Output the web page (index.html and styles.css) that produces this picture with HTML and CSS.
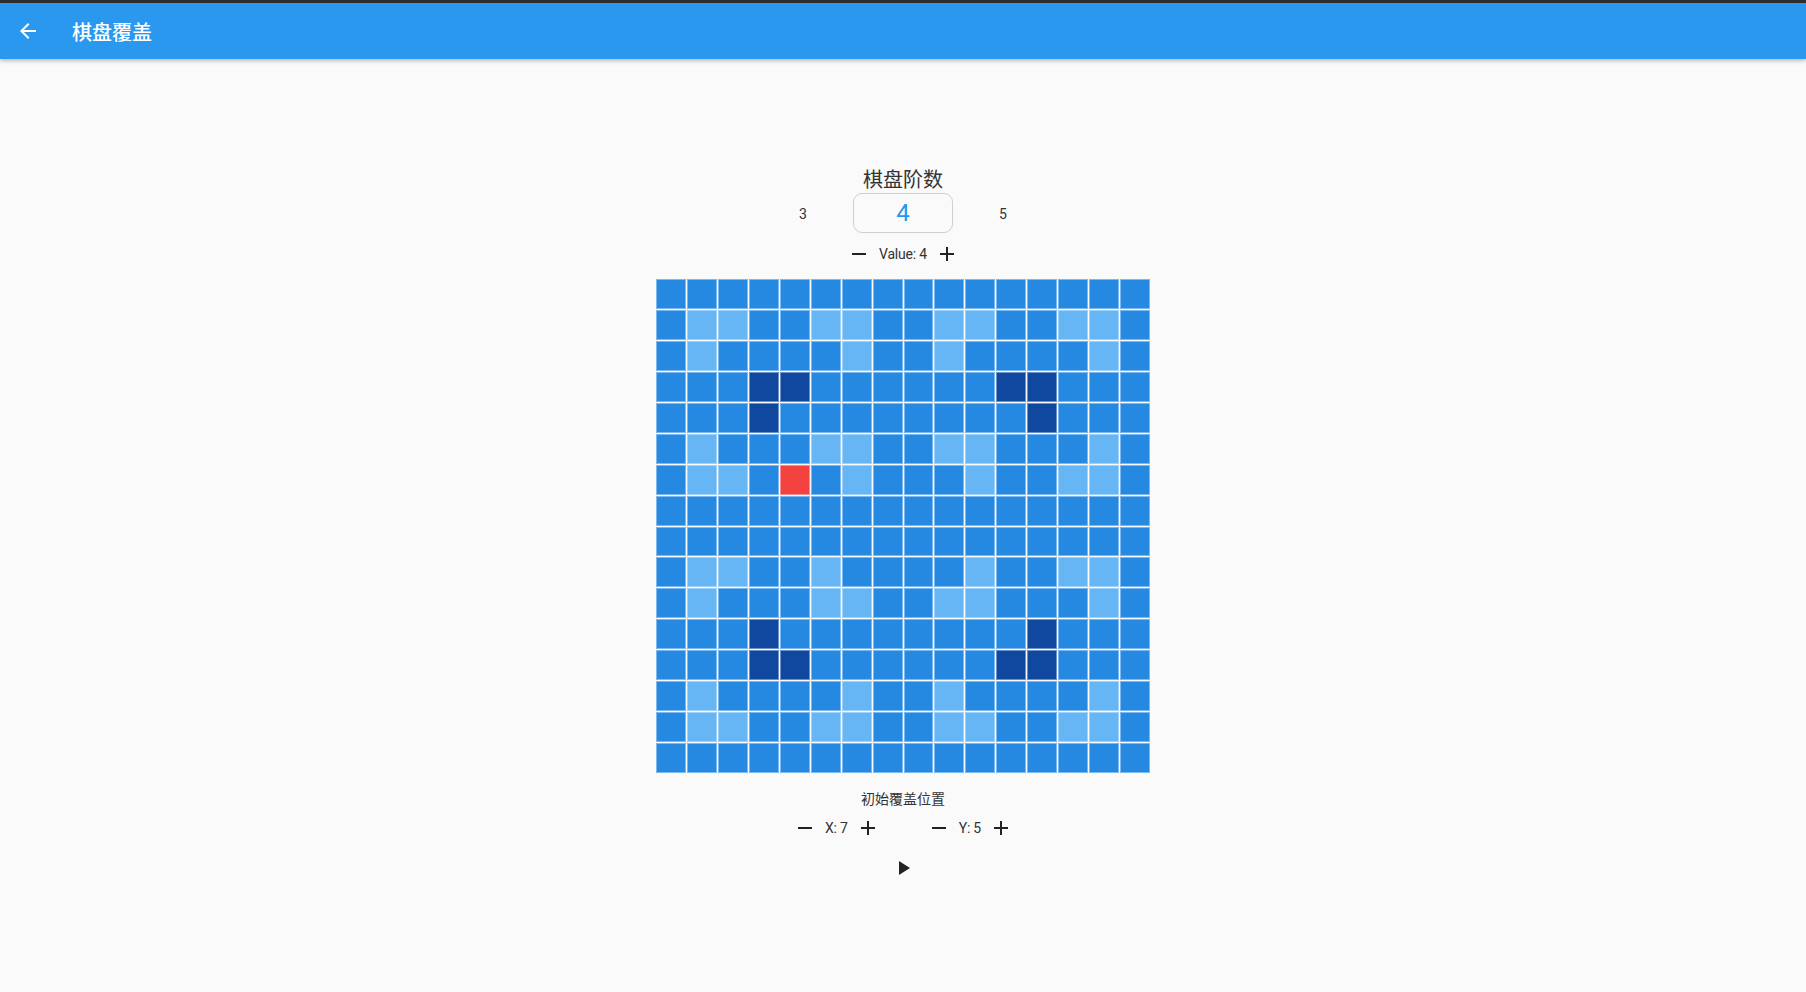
FILE: index.html
```html
<!DOCTYPE html>
<html lang="zh">
<head>
<meta charset="utf-8">
<title>棋盘覆盖</title>
<link rel="stylesheet" href="styles.css">
</head>
<body>
<header class="appbar">
  <div class="back">
    <svg viewBox="0 0 24 24" width="24" height="24"><path fill="#fff" d="M20 11H7.83l5.59-5.59L12 4l-8 8 8 8 1.41-1.41L7.83 13H20v-2z"/></svg>
  </div>
  <div class="title">棋盘覆盖</div>
</header>
<main class="main">
  <div class="heading">棋盘阶数</div>
  <div class="picker">
    <div class="pick-item">3</div>
    <div class="pick-item selected">4</div>
    <div class="pick-item">5</div>
  </div>
  <div class="stepper value-row">
    <svg class="icon" viewBox="0 0 24 24"><path d="M19 13H5v-2h14v2z"/></svg>
    <span class="label">Value: 4</span>
    <svg class="icon" viewBox="0 0 24 24"><path d="M19 13h-6v6h-2v-6H5v-2h6V5h2v6h6v2z"/></svg>
  </div>
  <div class="board">
    <div class="c m"></div><div class="c m"></div><div class="c m"></div><div class="c m"></div><div class="c m"></div><div class="c m"></div><div class="c m"></div><div class="c m"></div><div class="c m"></div><div class="c m"></div><div class="c m"></div><div class="c m"></div><div class="c m"></div><div class="c m"></div><div class="c m"></div><div class="c m"></div>
    <div class="c m"></div><div class="c l"></div><div class="c l"></div><div class="c m"></div><div class="c m"></div><div class="c l"></div><div class="c l"></div><div class="c m"></div><div class="c m"></div><div class="c l"></div><div class="c l"></div><div class="c m"></div><div class="c m"></div><div class="c l"></div><div class="c l"></div><div class="c m"></div>
    <div class="c m"></div><div class="c l"></div><div class="c m"></div><div class="c m"></div><div class="c m"></div><div class="c m"></div><div class="c l"></div><div class="c m"></div><div class="c m"></div><div class="c l"></div><div class="c m"></div><div class="c m"></div><div class="c m"></div><div class="c m"></div><div class="c l"></div><div class="c m"></div>
    <div class="c m"></div><div class="c m"></div><div class="c m"></div><div class="c d"></div><div class="c d"></div><div class="c m"></div><div class="c m"></div><div class="c m"></div><div class="c m"></div><div class="c m"></div><div class="c m"></div><div class="c d"></div><div class="c d"></div><div class="c m"></div><div class="c m"></div><div class="c m"></div>
    <div class="c m"></div><div class="c m"></div><div class="c m"></div><div class="c d"></div><div class="c m"></div><div class="c m"></div><div class="c m"></div><div class="c m"></div><div class="c m"></div><div class="c m"></div><div class="c m"></div><div class="c m"></div><div class="c d"></div><div class="c m"></div><div class="c m"></div><div class="c m"></div>
    <div class="c m"></div><div class="c l"></div><div class="c m"></div><div class="c m"></div><div class="c m"></div><div class="c l"></div><div class="c l"></div><div class="c m"></div><div class="c m"></div><div class="c l"></div><div class="c l"></div><div class="c m"></div><div class="c m"></div><div class="c m"></div><div class="c l"></div><div class="c m"></div>
    <div class="c m"></div><div class="c l"></div><div class="c l"></div><div class="c m"></div><div class="c r"></div><div class="c m"></div><div class="c l"></div><div class="c m"></div><div class="c m"></div><div class="c m"></div><div class="c l"></div><div class="c m"></div><div class="c m"></div><div class="c l"></div><div class="c l"></div><div class="c m"></div>
    <div class="c m"></div><div class="c m"></div><div class="c m"></div><div class="c m"></div><div class="c m"></div><div class="c m"></div><div class="c m"></div><div class="c m"></div><div class="c m"></div><div class="c m"></div><div class="c m"></div><div class="c m"></div><div class="c m"></div><div class="c m"></div><div class="c m"></div><div class="c m"></div>
    <div class="c m"></div><div class="c m"></div><div class="c m"></div><div class="c m"></div><div class="c m"></div><div class="c m"></div><div class="c m"></div><div class="c m"></div><div class="c m"></div><div class="c m"></div><div class="c m"></div><div class="c m"></div><div class="c m"></div><div class="c m"></div><div class="c m"></div><div class="c m"></div>
    <div class="c m"></div><div class="c l"></div><div class="c l"></div><div class="c m"></div><div class="c m"></div><div class="c l"></div><div class="c m"></div><div class="c m"></div><div class="c m"></div><div class="c m"></div><div class="c l"></div><div class="c m"></div><div class="c m"></div><div class="c l"></div><div class="c l"></div><div class="c m"></div>
    <div class="c m"></div><div class="c l"></div><div class="c m"></div><div class="c m"></div><div class="c m"></div><div class="c l"></div><div class="c l"></div><div class="c m"></div><div class="c m"></div><div class="c l"></div><div class="c l"></div><div class="c m"></div><div class="c m"></div><div class="c m"></div><div class="c l"></div><div class="c m"></div>
    <div class="c m"></div><div class="c m"></div><div class="c m"></div><div class="c d"></div><div class="c m"></div><div class="c m"></div><div class="c m"></div><div class="c m"></div><div class="c m"></div><div class="c m"></div><div class="c m"></div><div class="c m"></div><div class="c d"></div><div class="c m"></div><div class="c m"></div><div class="c m"></div>
    <div class="c m"></div><div class="c m"></div><div class="c m"></div><div class="c d"></div><div class="c d"></div><div class="c m"></div><div class="c m"></div><div class="c m"></div><div class="c m"></div><div class="c m"></div><div class="c m"></div><div class="c d"></div><div class="c d"></div><div class="c m"></div><div class="c m"></div><div class="c m"></div>
    <div class="c m"></div><div class="c l"></div><div class="c m"></div><div class="c m"></div><div class="c m"></div><div class="c m"></div><div class="c l"></div><div class="c m"></div><div class="c m"></div><div class="c l"></div><div class="c m"></div><div class="c m"></div><div class="c m"></div><div class="c m"></div><div class="c l"></div><div class="c m"></div>
    <div class="c m"></div><div class="c l"></div><div class="c l"></div><div class="c m"></div><div class="c m"></div><div class="c l"></div><div class="c l"></div><div class="c m"></div><div class="c m"></div><div class="c l"></div><div class="c l"></div><div class="c m"></div><div class="c m"></div><div class="c l"></div><div class="c l"></div><div class="c m"></div>
    <div class="c m"></div><div class="c m"></div><div class="c m"></div><div class="c m"></div><div class="c m"></div><div class="c m"></div><div class="c m"></div><div class="c m"></div><div class="c m"></div><div class="c m"></div><div class="c m"></div><div class="c m"></div><div class="c m"></div><div class="c m"></div><div class="c m"></div><div class="c m"></div>
  </div>
  <div class="subheading">初始覆盖位置</div>
  <div class="pos-row">
    <div class="stepper">
      <svg class="icon" viewBox="0 0 24 24"><path d="M19 13H5v-2h14v2z"/></svg>
      <span class="label">X: 7</span>
      <svg class="icon" viewBox="0 0 24 24"><path d="M19 13h-6v6h-2v-6H5v-2h6V5h2v6h6v2z"/></svg>
    </div>
    <div class="stepper">
      <svg class="icon" viewBox="0 0 24 24"><path d="M19 13H5v-2h14v2z"/></svg>
      <span class="label">Y: 5</span>
      <svg class="icon" viewBox="0 0 24 24"><path d="M19 13h-6v6h-2v-6H5v-2h6V5h2v6h6v2z"/></svg>
    </div>
  </div>
  <svg class="icon play" viewBox="0 0 24 24"><path d="M8 5v14l11-7z"/></svg>
</main>
</body>
</html>
```

FILE: styles.css
```css
html, body {
  margin: 0;
  padding: 0;
  background: #fafafa;
  font-family: Roboto, "Noto Sans CJK SC", sans-serif;
  color: #333;
}

.appbar {
  border-top: 3px solid #2d2d2d;
  height: 56px;
  background: #2b98f0;
  display: flex;
  align-items: center;
  box-shadow: 0 2px 4px rgba(0, 0, 0, 0.25);
  position: relative;
}

.back {
  width: 56px;
  height: 56px;
  display: flex;
  align-items: center;
  justify-content: center;
}

.title {
  margin-left: 16px;
  color: #fff;
  font-size: 20px;
  font-weight: 500;
  font-family: Roboto, "Noto Sans CJK SC", sans-serif;
}

.main {
  display: flex;
  flex-direction: column;
  align-items: center;
  padding-top: 108px;
}

.heading {
  font-size: 20px;
  line-height: 24px;
  margin-bottom: 2px;
  color: #333;
  font-family: "Noto Sans CJK SC", sans-serif;
}

.picker {
  display: flex;
  width: 300px;
}

.pick-item {
  width: 100px;
  height: 40px;
  display: flex;
  align-items: center;
  justify-content: center;
  font-size: 14px;
  color: #333;
  box-sizing: border-box;
  padding-top: 1px;
}

.pick-item.selected {
  border: 1px solid #cfcfcf;
  border-radius: 9px;
  color: #2196f3;
  font-size: 24px;
  padding-top: 0;
}

.stepper {
  display: flex;
  align-items: center;
  gap: 8px;
  height: 24px;
}

.value-row {
  margin-top: 9px;
}

.label {
  font-size: 14px;
  color: #333;
  letter-spacing: -0.2px;
}

.icon {
  width: 24px;
  height: 24px;
  fill: #222;
}

.board {
  margin-top: 13px;
  width: 494px;
  height: 494px;
  display: grid;
  grid-template-columns: repeat(16, 1fr);
  grid-template-rows: repeat(16, 1fr);
  gap: 1px;
}

.c {
  box-sizing: border-box;
  border: 1px solid rgba(255, 255, 255, 0.4);
}

.c.m { background: #2589e2; }
.c.l { background: #66b5f5; }
.c.d { background: #1048a0; }
.c.r { background: #f44240; }

.subheading {
  margin-top: 15px;
  font-size: 14px;
  line-height: 20px;
  color: #333;
  font-family: "Noto Sans CJK SC", sans-serif;
}

.pos-row {
  margin-top: 8px;
  display: flex;
  gap: 47px;
}

.play {
  margin-top: 16px;
}
```
